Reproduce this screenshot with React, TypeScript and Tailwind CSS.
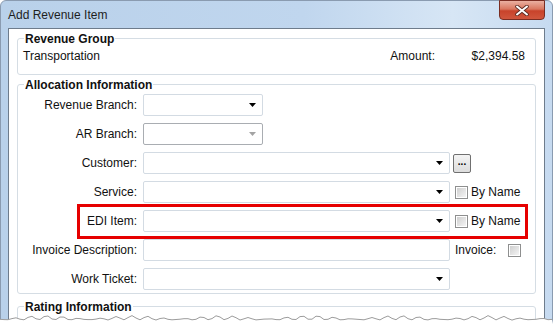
import React from 'react';

const font = "font-['Liberation_Sans',Arial,sans-serif]";

const Arrow = ({ disabled }: { disabled?: boolean }) => (
    <svg width="7" height="4" viewBox="0 0 7 4" className="shrink-0">
        <path d="M0 0h7L3.5 4z" fill={disabled ? '#a3a3a3' : '#000'} />
    </svg>
);

const Combo = ({ wide, disabled }: { wide?: boolean; disabled?: boolean }) => (
    <div
        className={`h-[22px] ${wide ? 'w-[307px]' : 'w-[120px]'} flex items-center justify-end pr-[6px] rounded-[2px] border bg-white ${
            disabled ? 'border-[#a9adb2]' : 'border-[#d3dbe3]'
        }`}
    >
        <Arrow disabled={disabled} />
    </div>
);

const Check = () => (
    <div className="w-[13px] h-[13px] border border-[#8e8f8f] bg-white p-[1px] shrink-0">
        <div className="w-full h-full bg-[linear-gradient(135deg,#cfcfcf,#f4f4f4)]" />
    </div>
);

const Row = ({ label, children, boxed }: { label: string; children: React.ReactNode; boxed?: boolean }) => (
    <div className="relative flex items-center h-[22px]">
        <span className="w-[119px] text-right text-[#111]">{label}</span>
        <div className="ml-[6px] flex items-center">{children}</div>
        {boxed && (
            <div className="absolute left-[59px] top-[-6px] w-[451px] h-[35px] border-[3px] border-[#e60000] pointer-events-none" />
        )}
    </div>
);

const Legend = ({ text }: { text: string }) => (
    <div className="-mt-[7px] ml-[6px] px-[1px] h-[14px] leading-[14px] font-bold bg-white self-start text-[#111]">{text}</div>
);

// torn paper edge along the bottom of the capture
const tornPoints = () => {
    const pts: string[] = [];
    for (let x = 0; x <= 553; x += 4) {
        const y = 4.5 + Math.sin(x * 0.37) * 1.2 + Math.sin(x * 1.13) * 0.9 + Math.cos(x * 0.071) * 0.8;
        pts.push(`${x},${y.toFixed(1)}`);
    }
    return pts;
};

export default function App() {
    const pts = tornPoints();
    return (
        <div className={`relative w-[553px] h-[324px] overflow-hidden bg-white ${font} text-[12px]`}>
            <div className="w-[553px] h-[340px] flex flex-col border border-[#8a9bb0] rounded-t-[6px] bg-[linear-gradient(90deg,#b9d1ea_0%,#c0d6ee_55%,#d7e6f5_82%,#c6daf0_100%)]">
                {/* title bar */}
                <div className="h-[27px] shrink-0 flex items-start justify-between pl-[7px] pr-[7px]">
                    <span className="pt-[7px] leading-[14px] text-[#1e1e1e]">Add Revenue Item</span>
                    <div className="-mt-px w-[46px] h-[20px] rounded-b-[4px] border border-[#7a2d22] bg-[linear-gradient(180deg,#eab0a1_0%,#d9775f_45%,#c8432b_55%,#d0563d_100%)] flex items-center justify-center">
                        <svg width="14" height="11" viewBox="0 0 14 11">
                            <path d="M2 1.5l10 8M12 1.5l-10 8" stroke="#5a2a22" strokeWidth="3.6" strokeLinecap="round" />
                            <path d="M2 1.5l10 8M12 1.5l-10 8" stroke="#fff" strokeWidth="2" strokeLinecap="round" />
                        </svg>
                    </div>
                </div>

                {/* client area */}
                <div className="flex-1 min-h-0 px-[7px]">
                    <div className="h-full bg-white border-l border-t border-r border-[#6e7c8c] flex flex-col">
                        {/* Revenue Group */}
                        <div className="shrink-0 mt-[9px] mx-[8px] h-[37px] border border-[#d5dde4] rounded-[3px] flex flex-col">
                            <Legend text="Revenue Group" />
                            <div className="mt-[3px] h-[14px] leading-[14px] flex pl-[5px] pr-[10px] text-[#111]">
                                <span>Transportation</span>
                                <span className="ml-auto">Amount:</span>
                                <span className="w-[90px] text-right">$2,394.58</span>
                            </div>
                        </div>

                        {/* Allocation Information */}
                        <div className="shrink-0 mt-[9px] mx-[8px] border border-[#d5dde4] rounded-[3px] flex flex-col pb-[3px]">
                            <Legend text="Allocation Information" />
                            <div className="mt-[2px] flex flex-col gap-[7px]">
                                <Row label="Revenue Branch:">
                                    <Combo />
                                </Row>
                                <Row label="AR Branch:">
                                    <Combo disabled />
                                </Row>
                                <Row label="Customer:">
                                    <Combo wide />
                                    <div className="ml-[3px] w-[18px] h-[19px] rounded-[2px] border border-[#707070] bg-[linear-gradient(180deg,#f4f4f4,#dcdcdc)] flex items-center justify-center text-[10px] font-bold leading-none pb-[3px]">
                                        ...
                                    </div>
                                </Row>
                                <Row label="Service:">
                                    <Combo wide />
                                    <div className="ml-[5px]"><Check /></div>
                                    <span className="ml-[3px] text-[#111]">By Name</span>
                                </Row>
                                <Row label="EDI Item:" boxed>
                                    <Combo wide />
                                    <div className="ml-[5px]"><Check /></div>
                                    <span className="ml-[3px] text-[#111]">By Name</span>
                                </Row>
                                <Row label="Invoice Description:">
                                    <div className="h-[22px] w-[307px] rounded-[2px] border border-[#d3dbe3] bg-white" />
                                    <span className="ml-[5px] text-[#111]">Invoice:</span>
                                    <div className="ml-[12px]"><Check /></div>
                                </Row>
                                <Row label="Work Ticket:">
                                    <Combo wide />
                                </Row>
                            </div>
                        </div>

                        {/* Rating Information */}
                        <div className="shrink-0 mt-[12px] mx-[8px] h-[40px] border border-[#d5dde4] rounded-[3px] flex flex-col">
                            <Legend text="Rating Information" />
                        </div>
                    </div>
                </div>
            </div>

            <svg className="absolute left-0 bottom-0" width="553" height="10" viewBox="0 0 553 10">
                <polygon points={`0,10 ${pts.join(' ')} 553,10`} fill="#fff" />
                <polyline points={pts.join(' ')} fill="none" stroke="#9c9c9c" strokeWidth="1" />
            </svg>
        </div>
    );
}
